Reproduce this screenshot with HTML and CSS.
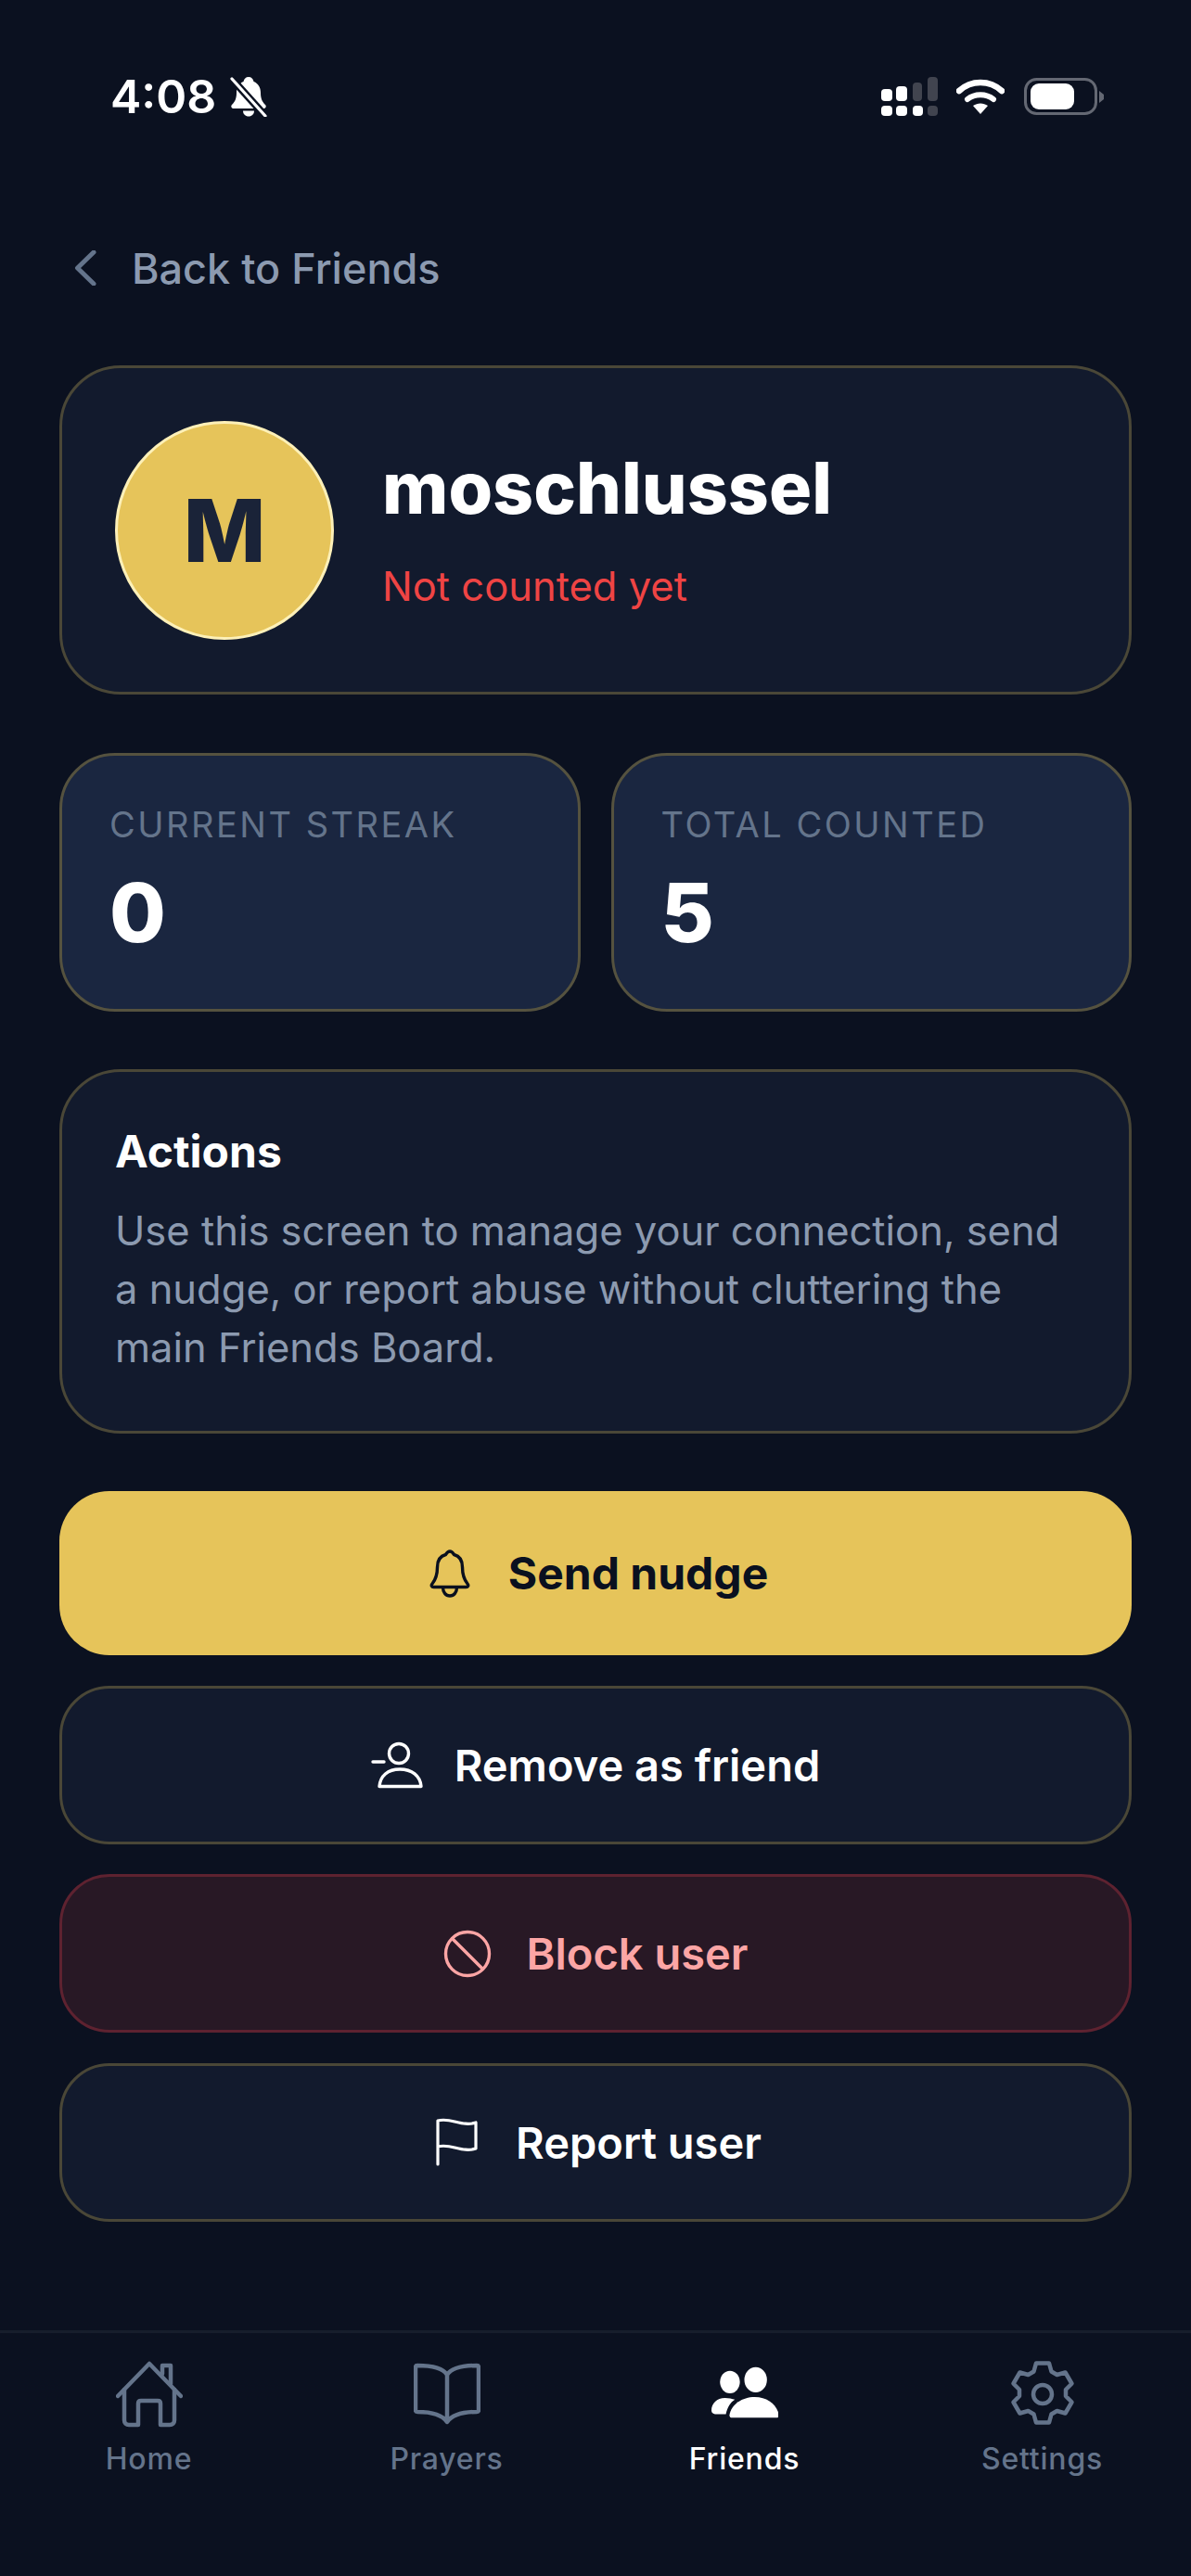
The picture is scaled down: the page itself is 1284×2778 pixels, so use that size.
FILE: index.html
```html
<!DOCTYPE html>
<html lang="en">
<head>
  <meta charset="UTF-8">
  <meta name="viewport" content="width=device-width, initial-scale=1.0">
  <title>Friend Details</title>
  <link rel="stylesheet" href="styles.css">
</head>
<body>
  <div class="app">
    <header class="status-bar">
      <div class="status-left">
        <span class="status-time">4:08</span>
        <svg class="icon-muted" viewBox="0 0 40 44">
          <path d="M20 1c3 0 5 2 5.500 5 5 2 7.500 6.500 7.500 12 0 6 1.500 9.500 5 13 1.500 1.500.5 4-1.500 4h-33c-2 0-3-2.500-1.500-4 3.500-3.500 5-7 5-13 0-5.500 2.500-10 7.500-12C15 3 17 1 20 1z" fill="#fff"/>
          <path d="M14 37.500h12c0 3.500-2.500 6-6 6s-6-2.500-6-6z" fill="#fff"/>
          <path d="M1 2l37 41" stroke="#0b1120" stroke-width="8"/>
          <path d="M2 3l36 40" stroke="#fff" stroke-width="3.200" stroke-linecap="round"/>
        </svg>
      </div>
      <div class="status-right">
        <svg class="icon-signal" viewBox="0 0 61 42">
          <rect x="0" y="13" width="12" height="13" rx="4" fill="#fff"/>
          <rect x="16" y="10" width="12" height="16" rx="4" fill="#fff"/>
          <rect x="34" y="6" width="10" height="20" rx="4" fill="#41444f"/>
          <rect x="50" y="0" width="11" height="26" rx="4" fill="#41444f"/>
          <rect x="0" y="31" width="12" height="11" rx="4" fill="#fff"/>
          <rect x="16" y="31" width="12" height="11" rx="4" fill="#fff"/>
          <rect x="34" y="31" width="11" height="11" rx="4" fill="#fff"/>
          <rect x="50" y="31" width="11" height="11" rx="4" fill="#41444f"/>
        </svg>
        <svg class="icon-wifi" viewBox="0 0 52 38">
          <path d="M3 13C16 1 36 1 49 13" fill="none" stroke="#fff" stroke-width="6.500" stroke-linecap="round"/>
          <path d="M12 22c8-6.500 20-6.500 28 0" fill="none" stroke="#fff" stroke-width="6" stroke-linecap="round"/>
          <path d="M18 29c5-3.500 11-3.500 16 0l-8 9z" fill="#fff"/>
        </svg>
        <svg class="icon-battery" viewBox="0 0 86 40">
          <rect x="1.500" y="1.500" width="76" height="37" rx="12" fill="none" stroke="#646873" stroke-width="3"/>
          <rect x="7" y="6" width="47" height="28" rx="9" fill="#fff"/>
          <path d="M81 14l5 4v5l-5 4z" fill="#646873"/>
        </svg>
      </div>
    </header>

    <main class="content">
      <a class="back-link">
        <svg class="icon-back" viewBox="0 0 24 38">
          <path d="M21 2L3.500 19 21 36" fill="none" stroke="#64748b" stroke-width="5" stroke-linecap="round" stroke-linejoin="round"/>
        </svg>
        <span>Back to Friends</span>
      </a>

      <section class="card profile-card">
        <div class="avatar">M</div>
        <div class="profile-info">
          <h1 class="profile-name">moschlussel</h1>
          <p class="profile-status">Not counted yet</p>
        </div>
      </section>

      <section class="stats">
        <div class="stat-card">
          <div class="stat-label">Current streak</div>
          <div class="stat-value">0</div>
        </div>
        <div class="stat-card">
          <div class="stat-label">Total counted</div>
          <div class="stat-value">5</div>
        </div>
      </section>

      <section class="card actions-card">
        <h2 class="actions-title">Actions</h2>
        <p class="actions-text">Use this screen to manage your connection, send a nudge, or report abuse without cluttering the main Friends Board.</p>
      </section>

      <div class="buttons">
        <button class="btn btn-primary">
          <svg class="btn-icon btn-icon-wide" viewBox="0 0 44 52" fill="none" stroke="#0a101f" stroke-width="3.400" stroke-linecap="round" stroke-linejoin="round">
            <path d="M22 2c2.500 0 3.500 2 4.500 3.500C32 7 35.500 12 35.500 19c0 7 1.500 13 5.500 18 1.500 1.800.5 3.500-1.500 3.500h-35c-2 0-3-1.700-1.500-3.500 4-5 5.500-11 5.500-18 0-7 3.500-12 9-13.500C18.500 4 19.500 2 22 2z"/>
            <path d="M14.500 41c0 5 3 9 7.500 9s7.500-4 7.500-9"/>
          </svg>
          <span>Send nudge</span>
        </button>
        <button class="btn btn-outline">
          <svg class="btn-icon btn-icon-tight" viewBox="0 0 56 52" fill="none" stroke="#fff" stroke-width="3.400" stroke-linecap="round" stroke-linejoin="round">
            <circle cx="30" cy="14" r="10.500"/>
            <path d="M2 23h12"/>
            <path d="M9 49.500C10 38 18 31 31 31s22 7 23 18.500z"/>
          </svg>
          <span>Remove as friend</span>
        </button>
        <button class="btn btn-danger">
          <svg class="btn-icon" viewBox="0 0 52 52" fill="none" stroke="#fca5a5" stroke-width="3.400" stroke-linecap="round">
            <circle cx="26" cy="26" r="23.500"/>
            <path d="M10 10l32 32"/>
          </svg>
          <span>Block user</span>
        </button>
        <button class="btn btn-outline">
          <svg class="btn-icon btn-icon-wide" viewBox="0 0 45 52" fill="none" stroke="#fff" stroke-width="3.200" stroke-linecap="round" stroke-linejoin="round">
            <path d="M2 50V3c14-4 26 7 41 2v28c-15 5-27-6-41-2"/>
          </svg>
          <span>Report user</span>
        </button>
      </div>
    </main>

    <nav class="tabs">
      <a class="tab">
        <svg class="tab-icon" viewBox="0 0 72 72" fill="none" stroke="#64748b" stroke-width="4.500" stroke-linecap="round" stroke-linejoin="round">
          <path d="M2 38L36 3l34 35"/>
          <path d="M9 31v33c0 3 2 5 5 5h10V46c0-2 1-3 3-3h18c2 0 3 1 3 3v23h10c3 0 5-2 5-5V31"/>
          <path d="M50 14V5h9v20"/>
        </svg>
        <span>Home</span>
      </a>
      <a class="tab">
        <svg class="tab-icon" viewBox="0 0 72 72" fill="none" stroke="#64748b" stroke-width="4.500" stroke-linecap="round" stroke-linejoin="round">
          <path d="M36 65V15C31 7 16 5 4 5c-1.500 0-2 1-2 2v46c0 1 .5 2 2 2 13 0 26 2 32 11 6-9 19-11 32-11 1.500 0 2-1 2-2V7c0-1-.5-2-2-2-12 0-27 2-32 10"/>
        </svg>
        <span>Prayers</span>
      </a>
      <a class="tab tab-active">
        <svg class="tab-icon" viewBox="0 0 74 56" fill="#fff">
          <ellipse cx="20.500" cy="14.500" rx="11" ry="12.500"/>
          <ellipse cx="49" cy="12" rx="12.500" ry="14"/>
          <path d="M0 46c0-8 6-14 15-14 4 0 8 1 11 2-5 3-8 8-10 16H4c-2 0-4-1.500-4-4z"/>
          <path d="M24 55c-2 0-3-1-3-3 2-12 14-20 28-20s24 8 27 20c0 2-1 3-3 3z" transform="translate(-1 -1)"/>
        </svg>
        <span>Friends</span>
      </a>
      <a class="tab">
        <svg class="tab-icon" viewBox="0 0 72 72" fill="none" stroke="#64748b" stroke-width="4.500" stroke-linecap="round" stroke-linejoin="round">
          <circle cx="36" cy="36" r="10"/>
          <path d="M29 2.500h14l2.500 9 6 3.500 9-2.500 7 12-6.500 6.500v7l6.500 6.500-7 12-9-2.500-6 3.500-2.500 9H29l-2.500-9-6-3.500-9 2.500-7-12 6.500-6.500v-7L4.500 24.500l7-12 9 2.500 6-3.500z"/>
        </svg>
        <span>Settings</span>
      </a>
    </nav>
  </div>
</body>
</html>
```

FILE: styles.css
```css
* {
  box-sizing: border-box;
}

body {
  font-family: 'Inter', 'Liberation Sans', sans-serif;
  background-color: #0b1120;
  color: #ffffff;
  margin: 0;
  padding: 0;
}

.app {
  display: flex;
  flex-direction: column;
  min-height: 100vh;
}

.status-bar {
  display: flex;
  justify-content: space-between;
  align-items: center;
  height: 128px;
  padding: 80px 94px 0 119px;
}

.status-left, .status-right {
  display: flex;
  align-items: center;
}

.status-time {
  font-size: 50px;
  font-weight: 600;
  line-height: 48px;
}

.icon-muted {
  width: 40px;
  height: 44px;
  margin-left: 15px;
}

.icon-signal {
  width: 61px;
  height: 42px;
}

.icon-wifi {
  width: 52px;
  height: 38px;
  margin-left: 20px;
}

.icon-battery {
  width: 86px;
  height: 40px;
  margin-left: 21px;
}

.content {
  flex: 1;
  padding: 0 64px;
}

.back-link {
  display: flex;
  align-items: center;
  gap: 38px;
  margin: 140px 0 0 16px;
  height: 42px;
  color: #8c9ab0;
  font-size: 45px;
  font-weight: 500;
}

.icon-back {
  width: 24px;
  height: 38px;
}

.card {
  background-color: #121a2d;
  border: 3px solid #4a4737;
  border-radius: 66px;
}

.profile-card {
  display: flex;
  align-items: center;
  gap: 52px;
  height: 355px;
  margin-top: 84px;
  padding: 0 57px;
}

.avatar {
  display: flex;
  justify-content: center;
  align-items: center;
  flex-shrink: 0;
  width: 236px;
  height: 236px;
  border: 3px solid #fdf0b8;
  border-radius: 50%;
  background-color: #e6c45a;
  color: #1a2338;
  font-size: 94px;
  font-weight: 800;
}

.profile-info {
  padding-bottom: 6px;
}

.profile-name {
  margin: 0;
  font-size: 77px;
  font-weight: 800;
  line-height: 90px;
}

.profile-status {
  margin: 36px 0 0;
  color: #ef4444;
  font-size: 43.5px;
  line-height: 50px;
}

.stats {
  display: grid;
  grid-template-columns: 1fr 1fr;
  gap: 33px;
  margin-top: 63px;
}

.stat-card {
  height: 279px;
  padding: 52px 51px 0;
  background-color: #1a2640;
  border: 3px solid #55523f;
  border-radius: 60px;
}

.stat-label {
  color: #64748b;
  font-size: 38px;
  line-height: 44px;
  letter-spacing: 2.5px;
  text-transform: uppercase;
}

.stat-value {
  margin-top: 23px;
  font-size: 88px;
  font-weight: 800;
  line-height: 100px;
}

.actions-card {
  height: 393px;
  margin-top: 62px;
  padding: 57px 57px 0;
}

.actions-title {
  margin: 0;
  font-size: 48px;
  font-weight: 700;
  line-height: 58px;
}

.actions-text {
  margin: 25px 0 0;
  color: #8c9ab0;
  font-size: 43.5px;
  line-height: 63px;
}

.buttons {
  display: flex;
  flex-direction: column;
  gap: 32.5px;
  margin-top: 62px;
}

.btn {
  display: flex;
  justify-content: center;
  align-items: center;
  gap: 38px;
  width: 100%;
  height: 171px;
  padding: 0;
  border: 3px solid transparent;
  border-radius: 54px;
  font-family: inherit;
  font-size: 47px;
  font-weight: 600;
}

.btn-icon {
  height: 52px;
  width: auto;
}

.btn-icon-wide {
  margin: 0 3px 0 7px;
}

.btn-icon-tight {
  margin-right: -4px;
}

.btn-primary {
  height: 177px;
  background-color: #e6c45a;
  color: #0a101f;
  font-size: 48px;
  font-weight: 700;
}

.btn-outline {
  background-color: #121a2d;
  border-color: #4a4737;
  color: #ffffff;
}

.btn-danger {
  background-color: #281825;
  border-color: #5e2230;
  color: #fca5a5;
}

.tabs {
  display: grid;
  grid-template-columns: repeat(4, 1fr);
  height: 265px;
  padding-top: 30px;
  border-top: 3px solid #171e2c;
}

.tab {
  display: flex;
  flex-direction: column;
  align-items: center;
  color: #64748b;
  font-size: 32px;
  font-weight: 500;
  letter-spacing: 0.8px;
}

.tab-active {
  color: #ffffff;
}

.tab-icon {
  width: 72px;
  height: 72px;
  margin-bottom: 14px;
}
```
